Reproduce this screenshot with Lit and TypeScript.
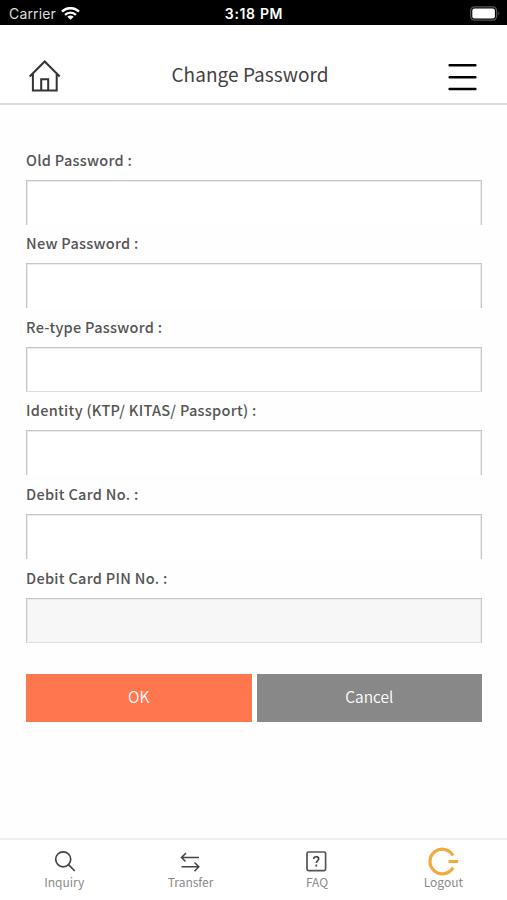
import { LitElement, html, css, svg } from "lit";
import { customElement, property } from "lit/decorators.js";
import { classMap } from "lit/directives/class-map.js";

@customElement("status-bar")
class StatusBar extends LitElement {
  static styles = css`
    :host {
      display: grid;
      grid-template-columns: 1fr auto 1fr;
      align-items: center;
      height: 25px;
      box-sizing: border-box;
      padding: 2px 6px 0 7px;
      background: #000;
      color: #fff;
      font: 14px/20px Inter, "Liberation Sans", sans-serif;
    }
    .left { display: flex; align-items: center; gap: 5px; padding-left: 2px; color: #dedede; }
    .carrier { letter-spacing: 0.15px; }
    .time { font-size: 14px; font-weight: 600; letter-spacing: 0.65px; }
    .battery { justify-self: end; }
    svg { display: block; }
  `;
  render() {
    return html`
      <div class="left">
        <span class="carrier">Carrier</span>
        <svg width="19" height="14" viewBox="0 0 19 14" fill="none" stroke="#fff" stroke-width="2.4">
          <path d="M1 4.700C5.800 0 13.200 0 18 4.700M4 7.900c3.200-3 7.800-3 11 0" />
          <path d="M9.500 12.800 6.300 9.800c1.900-1.700 4.500-1.700 6.400 0z" fill="#fff" stroke="none" />
        </svg>
      </div>
      <span class="time">3:18 PM</span>
      <svg class="battery" width="32" height="16" viewBox="0 0 32 16">
        <rect x="1.600" y=".9" width="26" height="13.200" rx="4" fill="none" stroke="#555" stroke-width="1.300" />
        <rect x="3.300" y="2.600" width="22.600" height="9.800" rx="2.200" fill="#fff" />
        <path d="M29.300 5.400q2 2.100 0 4.200z" fill="#555" />
      </svg>
    `;
  }
}

@customElement("form-field")
class FormField extends LitElement {
  @property() label = "";
  @property({ type: Boolean }) underlined = false;
  @property({ type: Boolean }) filled = false;
  static styles = css`
    :host { display: block; height: 83.6px; color: #555; }
    .label {
      display: block;
      height: 38px;
      font: 500 14.5px/36px "Noto Sans CJK KR", sans-serif;
      letter-spacing: 0.3px;
      white-space: nowrap;
    }
    .box {
      height: 45px;
      box-sizing: border-box;
      border: solid #c6c6c6;
      border-width: 1px 1px 0;
      box-shadow: inset 1px 1px #ececec, inset -1px 0 #ececec;
      background: #fff;
    }
    .underlined { border-bottom: 1px solid #dedede; }
    .filled { background: #f7f7f7; }
  `;
  render() {
    return html`
      <span class="label">${this.label}</span>
      <div class=${classMap({ box: true, underlined: this.underlined, filled: this.filled })}></div>
    `;
  }
}

const tabs = [
  {
    label: "Inquiry",
    icon: svg`<g stroke="#444" stroke-width="1.700"><circle cx="14.200" cy="13.300" r="7.500"/><path d="m19.500 18.600 6.300 6.400"/></g>`,
  },
  {
    label: "Transfer",
    icon: svg`<g stroke="#444" stroke-width="1.500"><path d="M24 11.500H6.500M11 7l-4.500 4.500 4 4M6.500 20.800H24M19.500 16.500l4.300 4.300-4.300 4.500"/></g>`,
  },
  {
    label: "FAQ",
    icon: svg`<rect x="6" y="6" width="18.600" height="18.600" rx="1.500" stroke="#555" stroke-width="1.700"/><path d="M12.700 13c0-3 5-3 5-.2 0 2-2.400 2-2.400 4.200M15.300 18.500v2" stroke="#444" stroke-width="1.700"/>`,
  },
  {
    label: "Logout",
    icon: svg`<path d="M25 9.500A12.300 12.300 0 1 0 25 21.600M20.500 15.500H30" stroke="#efab3e" stroke-width="3.200"/>`,
  },
];

@customElement("app-root")
class AppRoot extends LitElement {
  static styles = css`
    :host {
      display: flex;
      flex-direction: column;
      height: 900px;
      background: #fefefe;
      font-family: "Noto Sans CJK KR", sans-serif;
    }
    svg { display: block; fill: none; }
    .header {
      display: grid;
      grid-template-columns: 34px 1fr 34px;
      align-items: center;
      height: 80px;
      box-sizing: border-box;
      padding: 23px 28px 0;
      border-bottom: 2px solid #dcdcdc;
      background: #fff;
    }
    .title {
      margin: 0;
      padding: 0 7px 4px 0;
      text-align: center;
      color: #444041;
      font-size: 19px;
      line-height: 28px;
      font-weight: 400;
      letter-spacing: 0.05px;
    }
    .form { flex: 1; padding: 36.6px 25px 0 26px; }
    .actions { display: flex; gap: 5px; margin-top: 30.8px; }
    .button {
      flex: 1;
      height: 48px;
      padding: 0 0 3px;
      border: 0;
      color: #fff;
      font: 350 15.5px/45px "Noto Sans CJK KR", sans-serif;
    }
    .ok { background: #ff764f; }
    .cancel { background: #888; }
    .tabs {
      display: grid;
      grid-template-columns: repeat(4, 126.400px);
      height: 62px;
      box-sizing: border-box;
      border-top: 2px solid #efefef;
      background: #fff;
    }
    .tab {
      display: flex;
      flex-direction: column;
      align-items: center;
      padding: 6px 0 0 2px;
      color: #8a8a8a;
      font-size: 12px;
      line-height: 18px;
    }
    .tab span { margin-top: -4px; }
  `;
  render() {
    return html`
      <status-bar></status-bar>
      <header class="header">
        <svg width="34" height="34" viewBox="0 0 34 34" stroke="#333" stroke-width="2">
          <path d="M1.700 17.500 16.700 2.500 31.700 17.500M4.900 14.500V31.500H28.700V14.500M13.200 31V20.200H20.200V31" />
        </svg>
        <h1 class="title">Change Password</h1>
        <svg width="34" height="34" viewBox="0 0 34 34" stroke="#000" stroke-width="2.400" stroke-linecap="round">
          <path d="M4.600 6.300H30.400M4.600 18.200H30.400M4.600 30H30.400" />
        </svg>
      </header>
      <main class="form">
        <form-field label="Old Password :"></form-field>
        <form-field label="New Password :"></form-field>
        <form-field label="Re-type Password :" underlined></form-field>
        <form-field label="Identity (KTP/ KITAS/ Passport) :"></form-field>
        <form-field label="Debit Card No. :"></form-field>
        <form-field label="Debit Card PIN No. :" underlined filled></form-field>
        <div class="actions">
          <button class="button ok">OK</button>
          <button class="button cancel">Cancel</button>
        </div>
      </main>
      <nav class="tabs">
        ${tabs.map(
          (tab) => html`<div class="tab">
            <svg width="31" height="31" viewBox="0 0 31 31">${tab.icon}</svg>
            <span>${tab.label}</span>
          </div>`,
        )}
      </nav>
    `;
  }
}
